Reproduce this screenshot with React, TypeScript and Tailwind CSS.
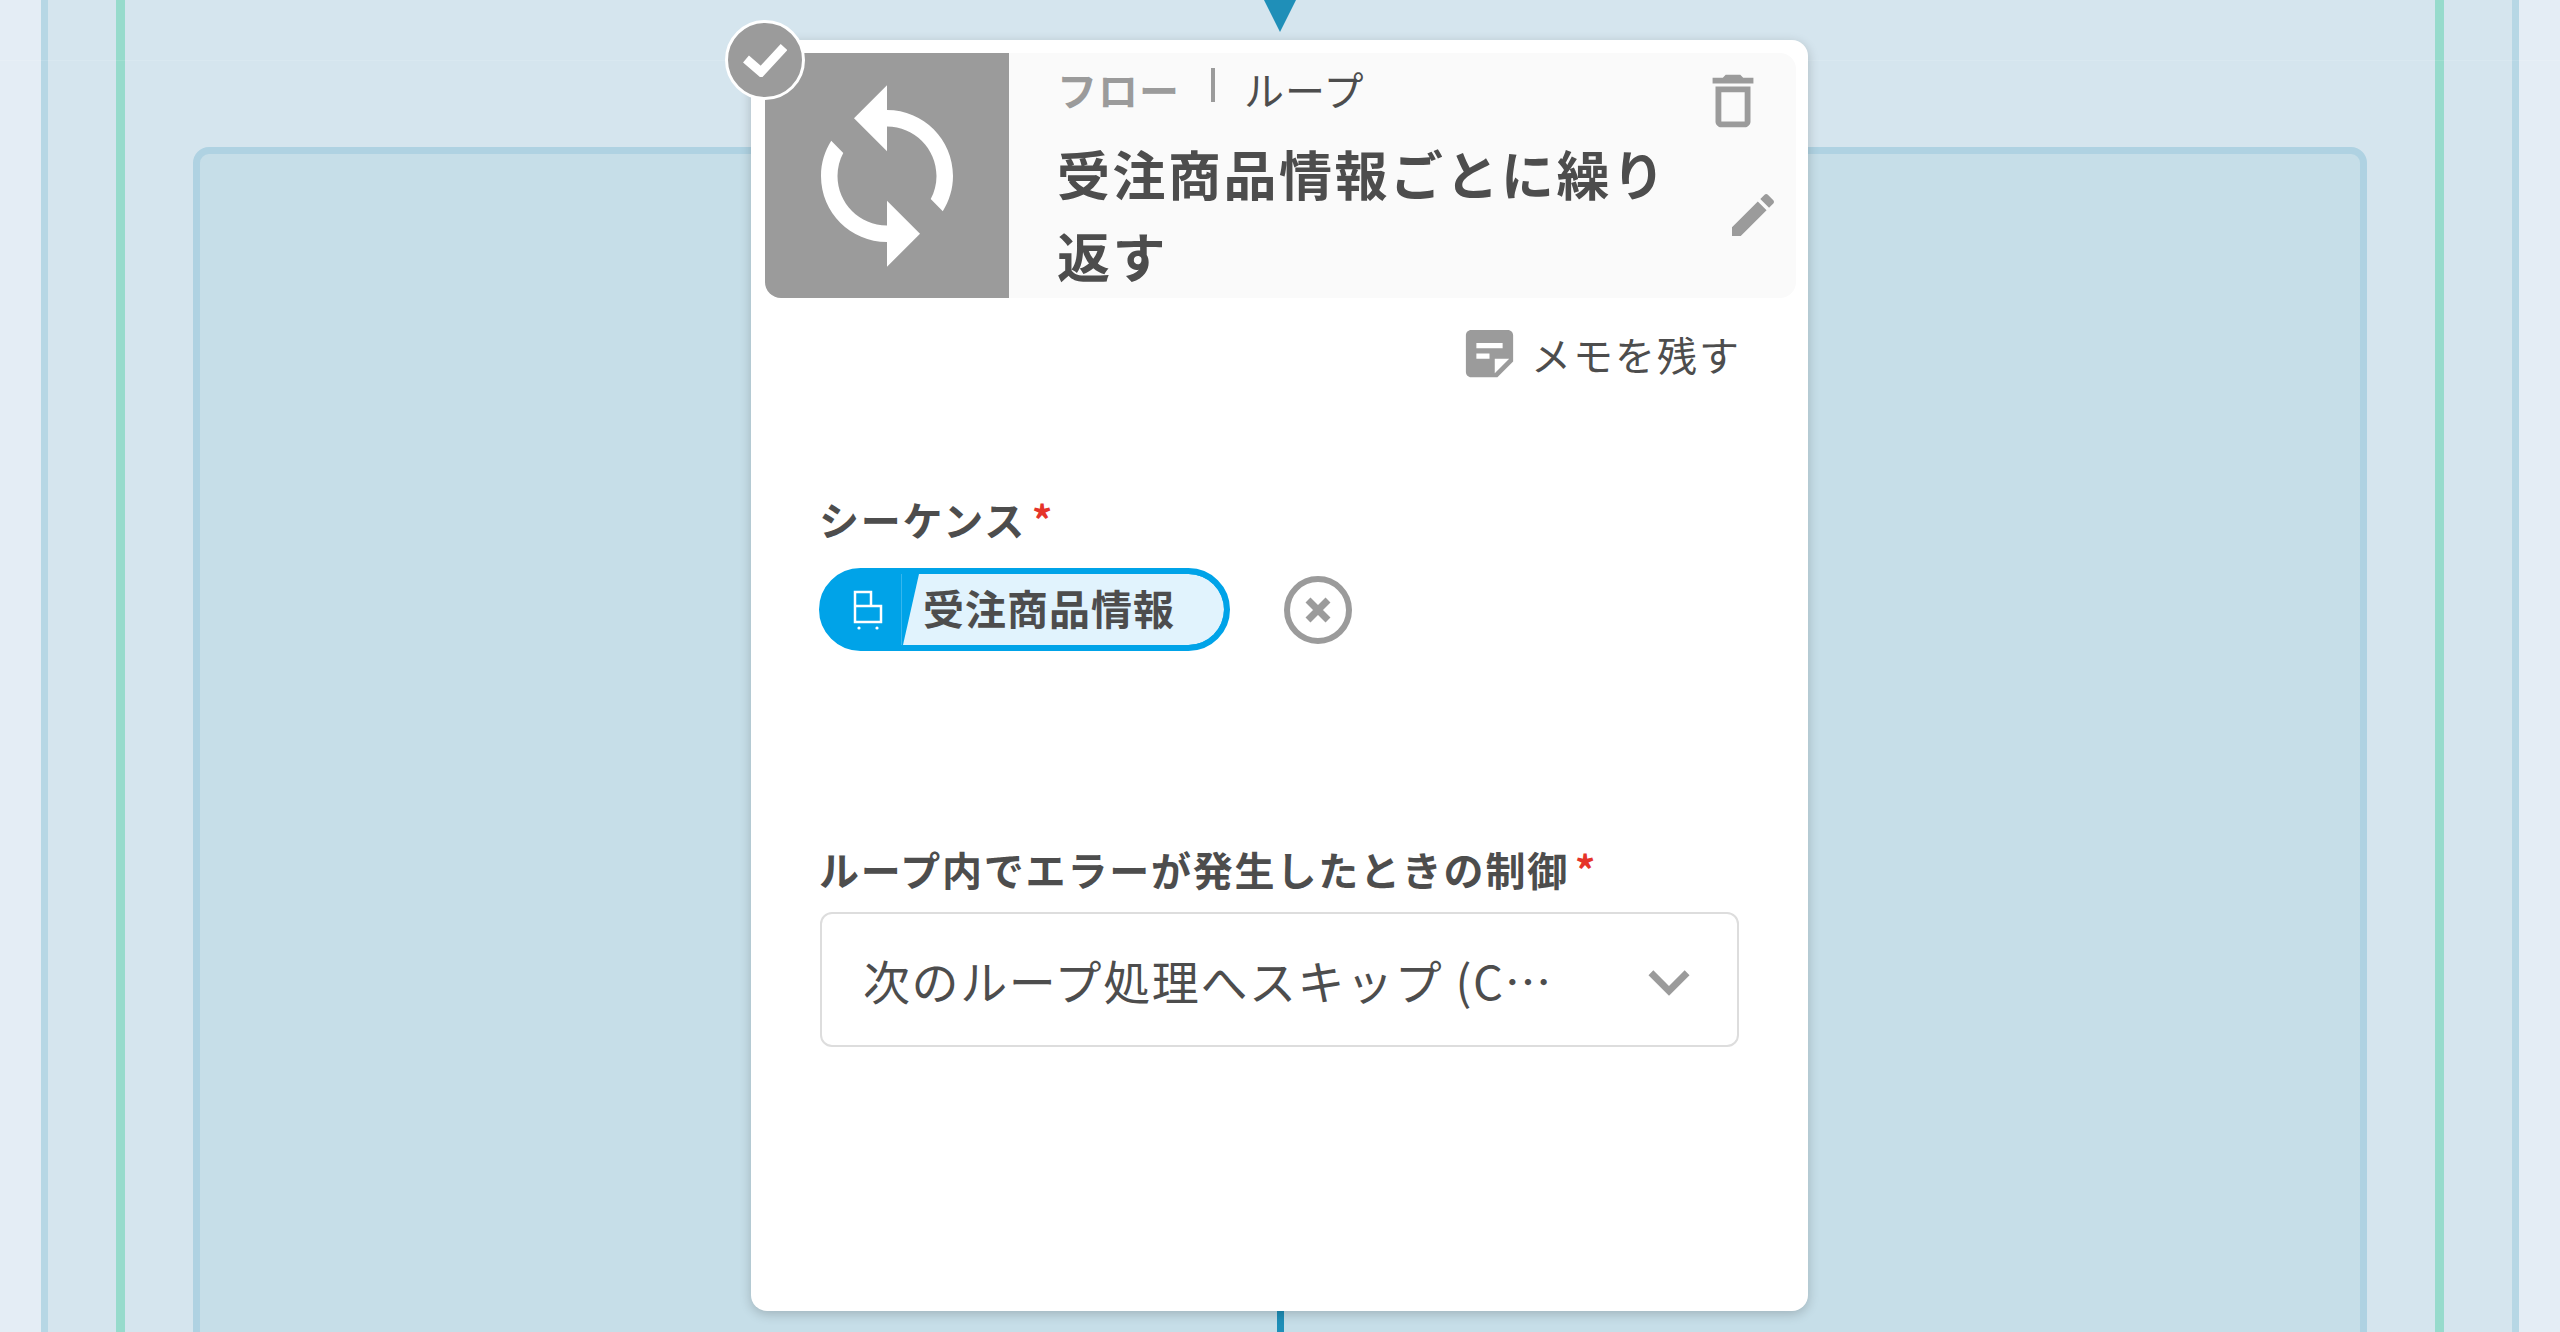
export default function App() {
  return (
    <div className="relative h-[1332px] w-[2560px] overflow-hidden bg-[#e4edf5] px-[41px] text-[#4d4d4d] [font-family:'Noto_Sans_CJK_JP','Noto_Sans',sans-serif]">
      <div className="h-full border-x-[7px] border-[#b7d7e5] bg-[#d5e5ee] pl-[68px] pr-[68px]">
        <div className="h-full border-x-[9px] border-[#97dbcc] pl-[68px] pr-[68px] pt-[147px]">
          <div className="h-[1400px] rounded-[16px] border-[7px] border-[#afd2e2] bg-[#c6dee8]" />
        </div>
      </div>

      <div className="absolute left-0 top-[60px] h-px w-full bg-white/10" />

      <svg className="absolute left-[1264px] top-0 h-[32px] w-[32px]" viewBox="0 0 32 32">
        <path d="M0 0h32L16 32z" fill="#1f8fb8" />
      </svg>
      <div className="absolute left-[1277px] top-[1300px] h-[40px] w-[7px] bg-[#1f8fb8]" />

      <div className="absolute left-[751px] top-[40px] flex h-[1271px] w-[1057px] flex-col rounded-[16px] bg-white py-[13px] pl-[14px] pr-[12px] shadow-[0_3px_12px_rgba(0,0,0,0.2)]">
        <div className="flex h-[245px] rounded-[16px] bg-[#fafafa]">
          <div className="flex w-[244px] shrink-0 items-center justify-center rounded-bl-[16px] bg-[#9b9b9b]">
            <svg className="h-[198px] w-[198px]" viewBox="0 0 24 24" fill="#fff">
              <path d="M12 4V1L8 5l4 4V6c3.31 0 6 2.69 6 6 0 1.01-.25 1.97-.7 2.8l1.46 1.46C19.54 15.03 20 13.57 20 12c0-4.42-3.58-8-8-8zm0 14c-3.31 0-6-2.69-6-6 0-1.01.25-1.97.7-2.8L5.24 7.74C4.46 8.97 4 10.43 4 12c0 4.42 3.58 8 8 8v3l4-4-4-4v3z" />
            </svg>
          </div>
          <div className="relative min-w-0 flex-1 pl-[48px] pr-[100px]">
            <div className="mt-[12px] flex h-[48px] items-center text-[40px] leading-[48px] tracking-[1px]">
              <span className="font-bold text-[#9b9b9b]">フロー</span>
              <span className="ml-[31px] mr-[29px] mb-[8px] h-[34px] w-[4px] bg-[#9b9b9b]" />
              <span>ループ</span>
            </div>
            <div className="mt-[19px] text-[53px] font-bold leading-[82px] tracking-[2.5px]">
              受注商品情報ごとに繰り返す
            </div>
            <svg className="absolute right-[28px] top-[13px] h-[70px] w-[70px]" viewBox="0 0 24 24" fill="#9b9b9b">
              <path d="M6 19c0 1.1.9 2 2 2h8c1.1 0 2-.9 2-2V7H6v12zM8 9h8v10H8V9zm7.5-5l-1-1h-5l-1 1H5v2h14V4z" />
            </svg>
            <svg className="absolute right-[15px] top-[134px] h-[56px] w-[56px]" viewBox="0 0 24 24" fill="#9b9b9b">
              <path d="M3 17.25V21h3.75L17.81 9.94l-3.75-3.75L3 17.25zM20.71 7.04c.39-.39.39-1.02 0-1.41l-2.34-2.34c-.39-.39-1.02-.39-1.41 0l-1.83 1.83 3.75 3.75 1.83-1.83z" />
            </svg>
          </div>
        </div>

        <div className="mt-[24px] flex items-center justify-end gap-[10px] pr-[55px] text-[40px] leading-[62px] tracking-[2px]">
          <svg className="h-[63px] w-[63px]" viewBox="0 0 24 24" fill="#9b9b9b">
            <path d="M19 3H4.99C3.89 3 3 3.9 3 5l.01 14c0 1.1.89 2 1.99 2h10l6-6V5c0-1.1-.9-2-2-2zM7 8h10v2H7V8zm5 6H7v-2h5v2zm2 5.5V14h5.5L14 19.5z" />
          </svg>
          <span>メモを残す</span>
        </div>

        <div className="mt-[106px] pl-[54px] text-[40px] font-bold leading-[56px] tracking-[1.8px]">
          シーケンス<span className="ml-[6px] text-[#e5342a]">*</span>
        </div>

        <div className="mt-[21px] flex items-center pl-[54px]">
          <div className="flex h-[83px] w-[411px] overflow-hidden rounded-full border-[6px] border-[#00a3e8] bg-[#00a3e8]">
            <div className="relative flex w-[78px] shrink-0 items-center pl-[28px]">
              <svg className="h-[40px] w-[30px]" viewBox="0 0 30 40" fill="none" stroke="#fff" strokeWidth="2.5">
                <path d="M2 2h16v14H2zM2 16h26v16H2z" />
                <circle cx="6" cy="38" r="1.6" fill="#fff" stroke="none" />
                <circle cx="24" cy="38" r="1.6" fill="#fff" stroke="none" />
              </svg>
              <div className="absolute left-[76px] top-0 h-full w-px bg-[#36b6ed]" />
            </div>
            <div className="flex min-w-0 flex-1 items-center rounded-r-full bg-[#e1f3fd] pb-[5px] pl-[20px] text-[41px] font-bold leading-none tracking-[1px] [clip-path:polygon(16px_0,100%_0,100%_100%,0_100%)]">受注商品情報</div>
          </div>
          <svg className="ml-[54px] h-[68px] w-[68px]" viewBox="0 0 68 68" fill="none" stroke="#9b9b9b">
            <circle cx="34" cy="34" r="31" strokeWidth="6" />
            <path d="M24 24l20 20M44 24L24 44" strokeWidth="7" />
          </svg>
        </div>

        <div className="mt-[190px] pl-[54px] text-[40px] font-bold leading-[56px] tracking-[1.8px]">
          ループ内でエラーが発生したときの制御<span className="ml-[6px] text-[#e5342a]">*</span>
        </div>

        <div className="ml-[55px] mt-[15px] flex h-[135px] w-[919px] items-center rounded-[12px] border-2 border-[#dddddd] pl-[41px] pr-[27px]">
          <div className="min-w-0 flex-1 truncate text-[47px] leading-[64px] tracking-[1.6px]">次のループ処理へスキップ (Continue)</div>
          <svg className="ml-[62px] mt-[5px] h-[82px] w-[82px] shrink-0" viewBox="0 0 24 24" fill="#9b9b9b">
            <path d="M16.59 8.59L12 13.17 7.41 8.59 6 10l6 6 6-6z" />
          </svg>
        </div>
      </div>

      <div className="absolute left-[725px] top-[20px] flex h-[80px] w-[80px] items-center justify-center rounded-full border-[3px] border-white bg-[#9b9b9b]">
        <svg className="h-[34px] w-[44px]" viewBox="0 0 44 34" fill="none" stroke="#fff" strokeWidth="9">
          <path d="M3 16l15 13L41 4" />
        </svg>
      </div>
    </div>
  );
}
